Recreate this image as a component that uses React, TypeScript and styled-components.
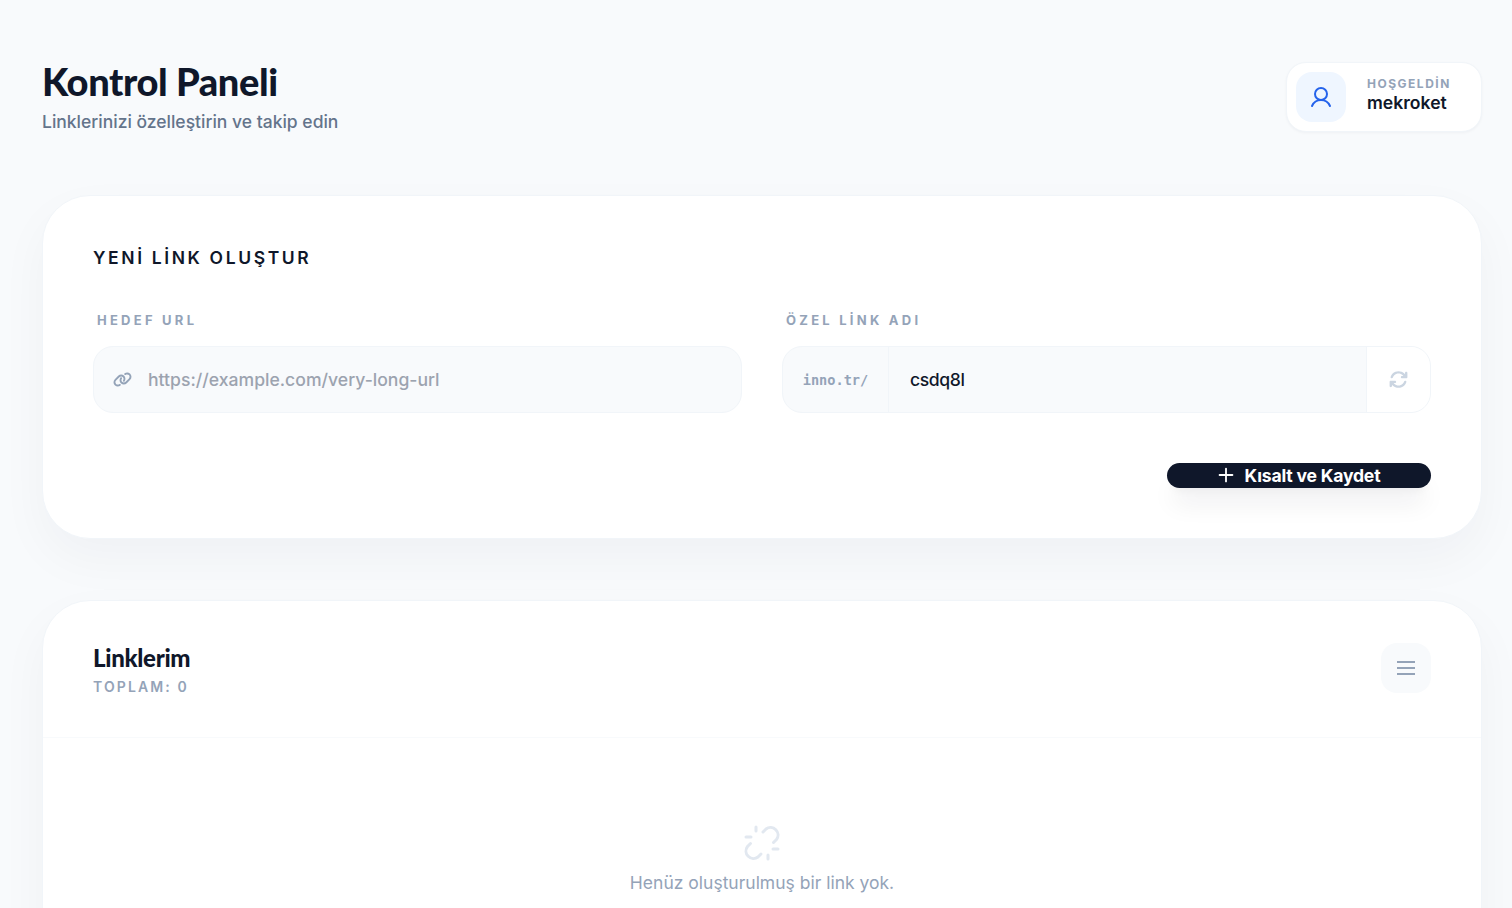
import styled, { createGlobalStyle } from 'styled-components';
import { Plus } from 'lucide-react';
import { FaArrowsRotate, FaLink } from 'react-icons/fa6';

const GlobalStyle = createGlobalStyle`
  html, body {
    margin: 0;
    height: 100%;
    overflow: hidden;
    background: #f8fafc;
    color: #0f172a;
    font-family: Inter, "Liberation Sans", sans-serif;
  }
  * { box-sizing: border-box; }
`;

const Page = styled.div`
  display: flex;
  flex-direction: column;
  padding: 62px 30px 40px 42px;
`;

const Header = styled.header`
  display: flex;
  justify-content: space-between;
  align-items: flex-start;
  height: 133px;
`;

const TitleBlock = styled.div`
  display: flex;
  flex-direction: column;
`;

const Title = styled.h1`
  margin: 0;
  font-family: Lato, sans-serif;
  font-size: 38px;
  line-height: 38px;
  font-weight: 900;
  letter-spacing: -0.4px;
  color: #0f172a;
`;

const Subtitle = styled.p`
  margin: 10px 0 0;
  font-size: 17.5px;
  line-height: 24px;
  font-weight: 500;
  color: #64748b;
`;

const UserCard = styled.div`
  display: flex;
  align-items: center;
  gap: 21px;
  width: 196px;
  height: 70px;
  padding: 9px;
  background: #fff;
  border: 1px solid #f1f5f9;
  border-radius: 20px;
  box-shadow: 0 1px 3px rgba(15, 23, 42, 0.04);
`;

const Avatar = styled.div`
  display: flex;
  align-items: center;
  justify-content: center;
  width: 50px;
  height: 50px;
  border-radius: 16px;
  background: #eff6ff;
  color: #2563eb;
`;

const UserText = styled.div`
  display: flex;
  flex-direction: column;
  padding-bottom: 4px;
`;

const Welcome = styled.span`
  font-size: 12px;
  line-height: 16px;
  font-weight: 700;
  letter-spacing: 1.5px;
  color: #94a3b8;
`;

const UserName = styled.span`
  font-size: 17.6px;
  line-height: 22px;
  font-weight: 600;
  color: #0f172a;
`;

const Card = styled.section<{ $spaced?: boolean }>`
  background: #fff;
  border: 1px solid #f1f5f9;
  border-radius: 48px;
  box-shadow: 0 20px 50px rgba(15, 23, 42, 0.04);
  margin-top: ${props => (props.$spaced ? '61px' : '0')};
`;

const FormBody = styled.div`
  display: flex;
  flex-direction: column;
  padding: 50px;
  height: 342px;
`;

const SectionTitle = styled.h2`
  margin: 0;
  font-size: 17.5px;
  line-height: 24px;
  font-weight: 600;
  letter-spacing: 2.62px;
  color: #0f172a;
`;

const FieldGrid = styled.div`
  display: grid;
  grid-template-columns: 1fr 1fr;
  gap: 40px;
  margin-top: 42px;
`;

const Field = styled.div`
  display: flex;
  flex-direction: column;
  gap: 18px;
`;

const Label = styled.label`
  padding-left: 4px;
  font-size: 13px;
  line-height: 16px;
  font-weight: 700;
  letter-spacing: 3.25px;
  color: #94a3b8;
`;

const InputBox = styled.div`
  display: flex;
  align-items: center;
  height: 67px;
  background: #f8fafc;
  border: 1px solid #f1f5f9;
  border-radius: 20px;
  overflow: hidden;
`;

const LinkIconSlot = styled.span`
  display: flex;
  margin-left: 19px;
  color: #94a3b8;
`;

const Placeholder = styled.span`
  margin-left: 16px;
  font-size: 17.6px;
  font-weight: 500;
  color: #9ca3af;
`;

const Prefix = styled.span`
  display: flex;
  align-items: center;
  justify-content: center;
  width: 106px;
  height: 100%;
  border-right: 1px solid #f1f5f9;
  font-family: "DejaVu Sans Mono", "Liberation Mono", monospace;
  font-size: 13.6px;
  font-weight: 700;
  color: #94a3b8;
`;

const SlugValue = styled.span`
  flex: 1;
  padding-left: 21px;
  font-size: 17.6px;
  font-weight: 500;
  letter-spacing: -0.4px;
  color: #0f172a;
`;

const RefreshButton = styled.button`
  display: flex;
  align-items: center;
  justify-content: center;
  width: 64px;
  height: 100%;
  padding: 0;
  background: #fff;
  border: none;
  border-left: 1px solid #f1f5f9;
  color: #cbd5e1;
`;

const Actions = styled.div`
  display: flex;
  justify-content: flex-end;
  margin-top: 50px;
`;

const SaveButton = styled.button`
  display: flex;
  align-items: center;
  justify-content: center;
  gap: 8px;
  width: 264px;
  height: 25px;
  padding: 0 3px 0 0;
  background: #0f172a;
  border: none;
  border-radius: 999px;
  color: #fff;
  font-family: inherit;
  font-size: 17.6px;
  font-weight: 700;
  letter-spacing: -0.2px;
  box-shadow: 0 20px 25px -5px rgba(15, 23, 42, 0.08), 0 8px 10px -6px rgba(15, 23, 42, 0.06);

  svg {
    margin-top: -2px;
  }
`;

const ListHeader = styled.div`
  display: flex;
  justify-content: space-between;
  align-items: center;
  height: 137px;
  padding: 0 50px;
  border-bottom: 1px solid #f8fafc;
`;

const ListTitleBlock = styled.div`
  display: flex;
  flex-direction: column;
  gap: 3px;
`;

const ListTitle = styled.h3`
  margin: 0;
  font-family: Lato, sans-serif;
  font-size: 24px;
  line-height: 32px;
  font-weight: 900;
  letter-spacing: -0.3px;
  color: #0f172a;
`;

const ListCount = styled.span`
  font-size: 14px;
  line-height: 20px;
  font-weight: 600;
  letter-spacing: 2.1px;
  color: #94a3b8;
`;

const MenuButton = styled.button`
  display: flex;
  align-items: center;
  justify-content: center;
  width: 50px;
  height: 50px;
  margin-bottom: 2px;
  padding: 0;
  background: #f8fafc;
  border: none;
  border-radius: 16px;
  color: #94a3b8;
`;

const EmptyState = styled.div`
  display: flex;
  flex-direction: column;
  align-items: center;
  gap: 8px;
  padding: 87px 0 80px;
`;

const EmptyIcon = styled.span`
  display: flex;
  color: #e2e8f0;
`;

const EmptyText = styled.p`
  margin: 0;
  font-size: 17.5px;
  line-height: 28px;
  color: #94a3b8;
`;

const UserIcon = () => (
  <svg width="24" height="24" viewBox="0 0 24 24" fill="none" stroke="currentColor" strokeWidth="2" strokeLinecap="round">
    <circle cx="12" cy="9" r="6" />
    <path d="M3 21c1.600-3.600 5-6 9-6s7.400 2.400 9 6" />
  </svg>
);

const BarsIcon = () => (
  <svg width="18" height="14" viewBox="0 0 18 14" fill="none" stroke="currentColor" strokeWidth="2">
    <path d="M0 1h18M0 7h18M0 13h18" />
  </svg>
);

const BrokenLinkIcon = () => (
  <svg width="36" height="36" viewBox="0 0 36 36" fill="none" stroke="currentColor" strokeWidth="3" strokeLinecap="round" strokeLinejoin="round">
    <path d="M19 7l3-3a7.500 7.500 0 0 1 10.500 10.500l-3 3" />
    <path d="M17 29l-3 3A7.500 7.500 0 0 1 3.500 21.500l3-3" />
    <path d="M12 2v4M2 12h5M24 30v4M29 24h5" />
  </svg>
);

const App = () => {
  return (
    <Page>
      <GlobalStyle />
      <Header>
        <TitleBlock>
          <Title>Kontrol Paneli</Title>
          <Subtitle>Linklerinizi özelleştirin ve takip edin</Subtitle>
        </TitleBlock>
        <UserCard>
          <Avatar>
            <UserIcon />
          </Avatar>
          <UserText>
            <Welcome>HOŞGELDİN</Welcome>
            <UserName>mekroket</UserName>
          </UserText>
        </UserCard>
      </Header>

      <Card>
        <FormBody>
          <SectionTitle>YENİ LİNK OLUŞTUR</SectionTitle>
          <FieldGrid>
            <Field>
              <Label>HEDEF URL</Label>
              <InputBox>
                <LinkIconSlot>
                  <FaLink size={19} />
                </LinkIconSlot>
                <Placeholder>https://example.com/very-long-url</Placeholder>
              </InputBox>
            </Field>
            <Field>
              <Label>ÖZEL LİNK ADI</Label>
              <InputBox>
                <Prefix>inno.tr/</Prefix>
                <SlugValue>csdq8l</SlugValue>
                <RefreshButton>
                  <FaArrowsRotate size={19} />
                </RefreshButton>
              </InputBox>
            </Field>
          </FieldGrid>
          <Actions>
            <SaveButton>
              <Plus size={22} strokeWidth={2} />
              Kısalt ve Kaydet
            </SaveButton>
          </Actions>
        </FormBody>
      </Card>

      <Card $spaced>
        <ListHeader>
          <ListTitleBlock>
            <ListTitle>Linklerim</ListTitle>
            <ListCount>TOPLAM: 0</ListCount>
          </ListTitleBlock>
          <MenuButton>
            <BarsIcon />
          </MenuButton>
        </ListHeader>
        <EmptyState>
          <EmptyIcon>
            <BrokenLinkIcon />
          </EmptyIcon>
          <EmptyText>Henüz oluşturulmuş bir link yok.</EmptyText>
        </EmptyState>
      </Card>
    </Page>
  );
};

export default App;
